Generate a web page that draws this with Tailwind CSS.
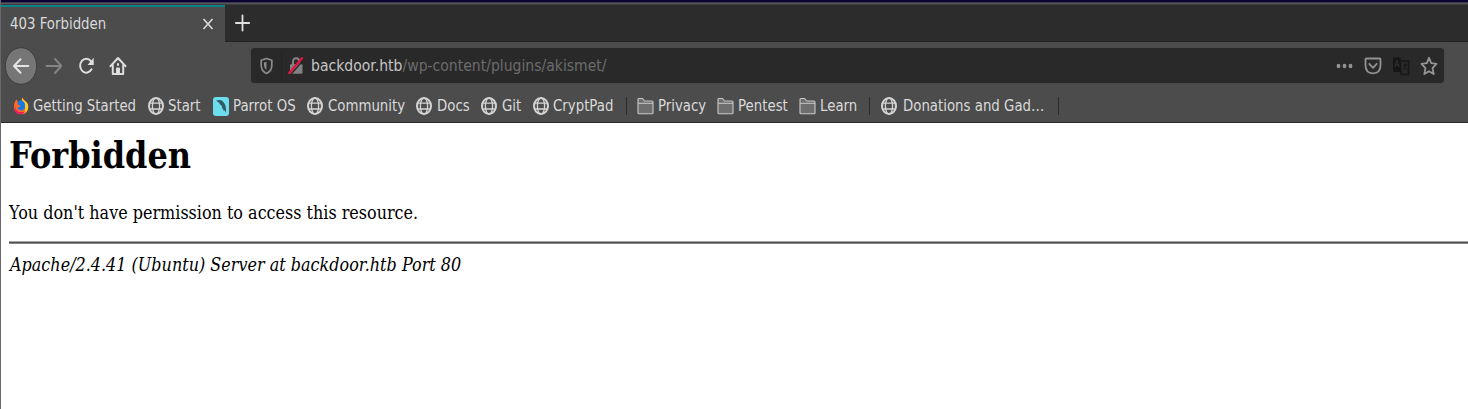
<!DOCTYPE html>
<html lang="en"><head><meta charset="utf-8"><title>403 Forbidden</title>
<script src="https://cdn.jsdelivr.net/npm/@tailwindcss/browser@4"></script></head>
<body class="w-[1468px] h-[409px] overflow-hidden bg-white font-['DejaVu_Sans',sans-serif] text-[13.333px] text-[#dadada] whitespace-nowrap">
<svg class="hidden">
  <symbol id="globe" viewBox="0 0 16 18"><g fill="none" stroke="#d4d4d4"><ellipse cx="8" cy="9" rx="7" ry="8" stroke-width="2"/><ellipse cx="8" cy="9" rx="3.6" ry="8" stroke-width="1.3"/><path d="M1.5 6.2h13M1.5 12h13" stroke-width="1.3"/></g></symbol>
  <symbol id="folder" viewBox="0 0 17 18"><path d="M1 16V2.500q0-1 1-1h3.600L7.600 4H15q1 0 1 1v11q0 .7-1 .7H2q-1 0-1-.7z" fill="#6e6e6e" stroke="#c8c8c8" stroke-width="1.100"/><path d="M1 6.300h15" stroke="#c8c8c8"/></symbol>
</svg>
<div class="flex h-[409px] flex-col border-l border-[#68666e]">
  <div class="h-[2px] bg-[#0b0230]"></div>
  <div class="h-[3px] border-y border-t-[#3c3950] border-b-[#3c3c3e] bg-[#55535b]"></div>
  <div class="flex h-[37px] bg-[#2c2c2c]">
    <div class="flex h-full w-[224px] items-center border-t-2 border-[#0c8286] bg-[#4c4c4c] pr-[11px] pb-[2px] pl-[9px]">
      <span class="scale-y-[1.17]">403 Forbidden</span>
      <svg class="ml-auto" width="12" height="14" viewBox="0 0 12 14"><path d="M1.500 2l9 10M10.500 2l-9 10" stroke="#d6d6d6" stroke-width="1.700"/></svg>
    </div>
    <div class="flex flex-1 items-center border-b border-[#222] pl-[10px]">
      <svg width="15" height="18" viewBox="0 0 15 18"><path d="M7.500 1.500v15M.8 9h13.400" stroke="#e0e0e0" stroke-width="1.800" stroke-linecap="round"/></svg>
    </div>
  </div>
  <div class="flex h-[47px] items-center bg-[#4c4c4c] pl-[4px]">
    <svg width="33" height="38" viewBox="0 0 33 38"><ellipse cx="16" cy="19" rx="15.700" ry="18.300" fill="#767676" stroke="#3d3d3d"/><path d="M23.300 19H9.500M15.500 12.300L9 19l6.500 6.700" fill="none" stroke="#e4e4e4" stroke-width="2" stroke-linecap="round" stroke-linejoin="round"/></svg>
    <svg class="ml-[7px]" width="18" height="18" viewBox="0 0 18 18"><path d="M1.500 9h14M10 2l6.300 7L10 16" fill="none" stroke="#858585" stroke-width="1.900" stroke-linecap="round" stroke-linejoin="round"/></svg>
    <svg class="ml-[15px]" width="18" height="20" viewBox="0 0 18 20"><path d="M12.900 5.100A6.100 7 0 1 0 13.500 13.300" fill="none" stroke="#dedede" stroke-width="2" stroke-linecap="round"/><path d="M15.700 1.700v7.200H9.500z" fill="#dedede"/></svg>
    <svg class="ml-[13px]" width="18" height="20" viewBox="0 0 18 20"><path d="M1.500 10.200L9 2l7.500 8.200M3.800 9v9h10.400V9" fill="none" stroke="#dedede" stroke-width="2" stroke-linecap="round" stroke-linejoin="round"/><path d="M7 18v-5.500q0-1 1-1h2q1 0 1 1V18z" fill="#dedede"/><path d="M9 7.300v2.500" stroke="#dedede" stroke-width="2"/></svg>
    <div class="ml-[124px] flex h-[35px] w-[1193px] items-center rounded bg-[#292929] pl-[9px] text-[14px] shadow-[0_0_1px_#333]">
      <svg width="13" height="18" viewBox="0 0 13 18"><path d="M6.500 1.500L1.200 3.300v5q0 5.700 5.300 8.200 5.300-2.500 5.300-8.200v-5z" fill="none" stroke="#8c8c8c" stroke-width="1.700" stroke-linejoin="round"/><path d="M6.500 4.800v8.300q-2.600-2-2.600-5.500V5.600z" fill="#8c8c8c"/></svg>
      <div class="ml-[8px] h-[28px] w-px bg-[#242424]"></div>
      <svg class="ml-[6px]" width="16" height="18" viewBox="0 0 16 18"><path d="M5 8V4.900q0-3.700 3.200-3.700t3.200 3.700V8" fill="none" stroke="#828282" stroke-width="2.100"/><rect x="2" y="7.300" width="12.500" height="9.500" rx="1" fill="#828282"/><path d="M3.200 17L14.500 4" stroke="#292929" stroke-width="1.400"/><path d="M1.200 16L14 1.200" stroke="#e9123f" stroke-width="2.200" stroke-linecap="round"/></svg>
      <div class="ml-[7px] mb-[1px] scale-y-[1.17] text-[#6c6c6c]"><span class="text-[#c6c6c6]">backdoor.htb</span>/wp-content/plugins/akismet/</div>
      <div class="ml-auto flex items-center pr-[6px]">
        <svg width="17" height="6" viewBox="0 0 17 6" fill="#929292"><ellipse cx="2.500" cy="3" rx="1.900" ry="2.200"/><ellipse cx="8.500" cy="3" rx="1.900" ry="2.200"/><ellipse cx="14.500" cy="3" rx="1.900" ry="2.200"/></svg>
        <svg class="ml-[11px]" width="18" height="18" viewBox="0 0 18 18" fill="none" stroke="#929292" stroke-width="1.800" stroke-linecap="round" stroke-linejoin="round"><path d="M2.500 1.500h13q1 0 1 1V8q0 8.300-7.500 8.300T1.500 8V2.500q0-1 1-1z"/><path d="M5.300 6.800L9 10.800l3.700-4"/></svg>
        <svg class="ml-[10px]" width="18" height="20" viewBox="0 0 18 20"><path d="M1 1.500h7.500L9.700 16H1z" fill="#161616"/><path d="M9 5h7.500v13.500H9.500L8 15.500" fill="none" stroke="#171717" stroke-width="1.500"/><path d="M2.800 11L5 4.500 7.300 11M3.500 9h3" fill="none" stroke="#333"/><path d="M11 9h4.500M13.500 7.500V9q0 3-2.500 4.500M12 10l3 4" fill="none" stroke="#171717"/></svg>
        <svg class="ml-[10px]" width="18" height="20" viewBox="0 0 18 20"><path d="M9 1.800l2.200 5.400 5.300.6-4 4.300 1.200 6L9 15.200l-4.700 2.900 1.200-6-4-4.300 5.300-.6z" fill="none" stroke="#969696" stroke-width="1.800" stroke-linejoin="round"/></svg>
      </div>
    </div>
  </div>
  <div class="flex h-[34px] items-center border-b border-[#292929] bg-[#4c4c4c] pl-[12px] [&_span]:scale-y-[1.17] [&_span]:origin-center [&>div]:flex [&>div]:shrink-0 [&>div]:items-center [&>div]:gap-1 [&_svg]:shrink-0">
    <div class="w-[135px]"><svg class="mt-px" width="16" height="18" viewBox="0 0 16 18"><path d="M3.300 2.500L5.200 5 8 4.500 9.500.5q.7 2 2.500 3.400Q15.500 6 15.200 10.500 14.500 17 8 17.300 1.500 17 1 10.500.7 5.500 3.300 2.500z" fill="#ff6a22"/><path d="M9.500.5q.5 2.200 2.500 3.400 3.500 2.300 3.200 6.600-.7 6.200-6.200 6.700 4-3.200 3-7.700Q11.500 6 9 4z" fill="#ffc928"/><path d="M2 9q.5 6 6 6.300 3 0 4.500-1.300Q11 17.500 7 17.200 3 17 1.700 13.500z" fill="#fa1964"/><path d="M4.800 5Q6 3 8.500 3.300 12 5 12 8q.7 4.500-3.200 5.500Q5.300 13.700 4.300 10.500l3-.8q.8-1-2.600-2.200z" fill="#1478e6"/></svg><span>Getting Started</span></div>
    <div class="w-[65px]"><svg class="mt-px" width="16" height="18"><use href="#globe"/></svg><span>Start</span></div>
    <div class="w-[94px]"><svg class="mt-px" width="16" height="19" viewBox="0 0 16 19"><rect width="16" height="19" rx="3" fill="#6cdeee"/><path d="M3 3.800Q8 1.700 10.800 5.500 13.700 9 12.800 15.700L10.700 12l-.3 2.300L8.500 8.500 7.200 7.500 5.500 5.200z" fill="#315c66"/></svg><span>Parrot OS</span></div>
    <div class="w-[109px]"><svg class="mt-px" width="16" height="18"><use href="#globe"/></svg><span class="ml-px">Community</span></div>
    <div class="w-[65px]"><svg class="mt-px" width="16" height="18"><use href="#globe"/></svg><span class="ml-px">Docs</span></div>
    <div class="w-[52px]"><svg class="mt-px" width="16" height="18"><use href="#globe"/></svg><span class="ml-px">Git</span></div>
    <div class="w-[93px]"><svg class="mt-px" width="16" height="18"><use href="#globe"/></svg><span>CryptPad</span></div>
    <div class="h-[18px] w-[11px] border-l border-[#2b2b2b]"></div>
    <div class="w-[80px]"><svg class="mt-px" width="17" height="18"><use href="#folder"/></svg><span>Privacy</span></div>
    <div class="w-[82px]"><svg class="mt-px" width="17" height="18"><use href="#folder"/></svg><span>Pentest</span></div>
    <div class="w-[70px]"><svg class="mt-px" width="17" height="18"><use href="#folder"/></svg><span>Learn</span></div>
    <div class="h-[18px] w-[12px] border-l border-[#2b2b2b]"></div>
    <div class="w-[177px]"><svg class="mt-px" width="16" height="18"><use href="#globe"/></svg><span class="ml-[2px]">Donations and Gad…</span></div>
    <div class="h-[18px] w-px bg-[#2b2b2b]"></div>
  </div>
  <main class="flex-1 bg-white pl-[8px] font-['DejaVu_Serif',serif] text-[16px] text-black">
    <h1 class="mt-[12px] h-[40px] scale-y-[1.17] text-[32px] leading-[40px] font-bold">Forbidden</h1>
    <p class="mt-[27px] h-[22px] scale-y-[1.17] leading-[22px]">You don't have permission to access this resource.</p>
    <hr class="mt-[17px] h-[3px] border-y border-t-[#aaa] border-b-[#888] bg-[#4c4c4c]">
    <address class="mt-[10px] ml-px h-[22px] scale-y-[1.17] leading-[22px] tracking-[0.01px] italic">Apache/2.4.41 (Ubuntu) Server at backdoor.htb Port 80</address>
  </main>
</div>
</body></html>
